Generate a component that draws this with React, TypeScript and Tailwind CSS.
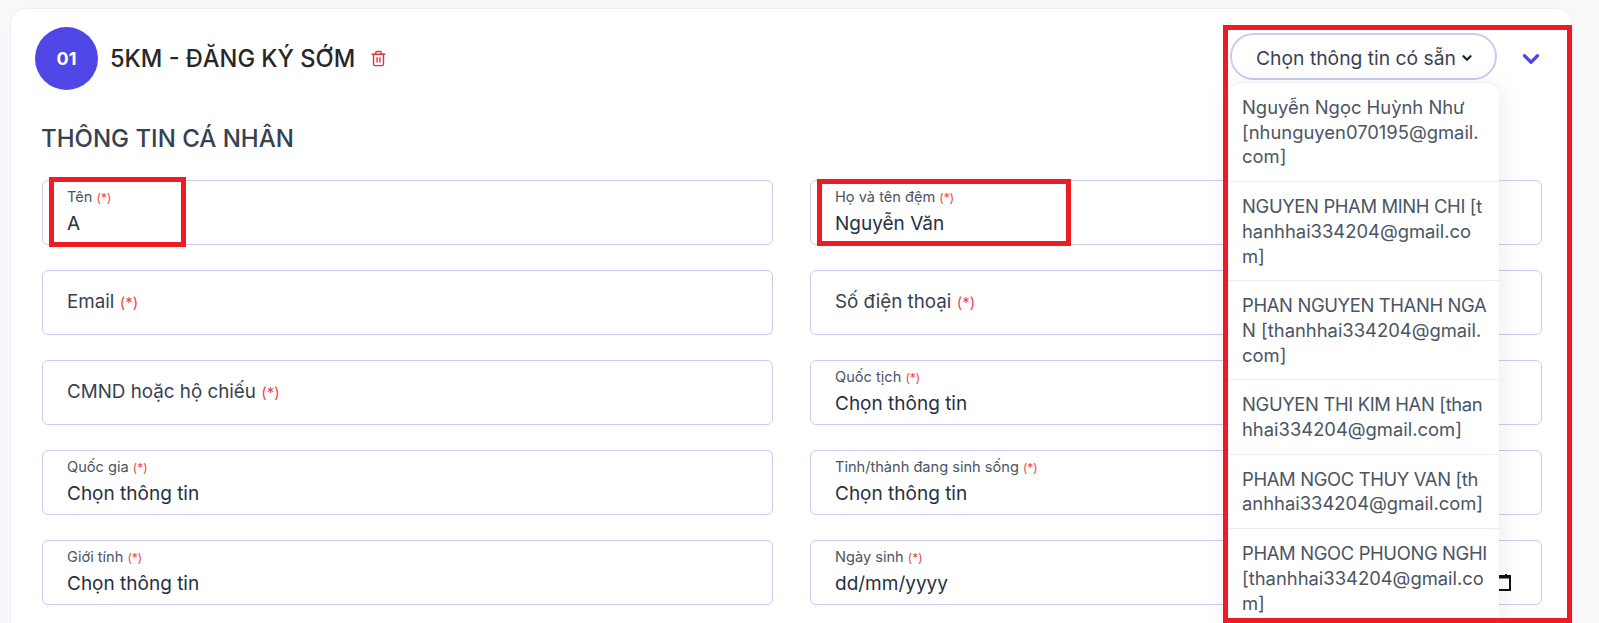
import { FiChevronDown, FiTrash2 } from "react-icons/fi";

type FieldProps = {
  label: string;
  value?: string;
  calendar?: boolean;
};

const Field = ({ label, value, calendar }: FieldProps) => {
  return (
    <div className="relative h-[65px] rounded-md border border-[#c9cdec] bg-white pl-[24px] flex flex-col justify-center">
      {value ? (
        <>
          <p className="text-[14.6px] leading-[16px] text-[#4b5563]">
            {label} <span className="text-[12px] text-[#ef4444]">(*)</span>
          </p>
          <p className="text-[19px] leading-[26px] text-[#27303f] mt-[5px]">{value}</p>
        </>
      ) : (
        <p className="text-[18.8px] text-[#374151]">
          {label} <span className="text-[15px] text-[#ef4444]">(*)</span>
        </p>
      )}
      {calendar && (
        <svg viewBox="0 0 20 17" className="absolute right-[30px] top-[33px] w-[20px] h-[17px]">
          <path d="M4 0h2v1h8V0h2v1h4v3.5H0V1h4z" fill="#111" />
          <path d="M1 3v13h18V3" fill="none" stroke="#111" strokeWidth="2" />
        </svg>
      )}
    </div>
  );
};

const people = [
  ["Nguyễn Ngọc Huỳnh Như", "[nhunguyen070195@gmail.", "com]"],
  ["NGUYEN PHAM MINH CHI [t", "hanhhai334204@gmail.co", "m]"],
  ["PHAN NGUYEN THANH NGA", "N [thanhhai334204@gmail.", "com]"],
  ["NGUYEN THI KIM HAN [than", "hhai334204@gmail.com]"],
  ["PHAM NGOC THUY VAN [th", "anhhai334204@gmail.com]"],
  ["PHAM NGOC PHUONG NGHI", "[thanhhai334204@gmail.co", "m]"],
];

const App = () => {
  return (
    <div className="relative h-[623px] overflow-hidden bg-[#fafafc] pt-2 pl-[10px] font-['Inter',sans-serif]">
      <div className="w-[1563px] h-[640px] rounded-2xl border border-[#eeeef6] bg-white px-[24px] pt-[18px] shadow-[0_0_20px_rgba(0,0,0,0.03)]">
        <div className="flex items-center">
          <div className="size-[63px] rounded-full bg-[#4f46e5] flex items-center justify-center text-white font-bold text-[18px]">
            01
          </div>
          <h1 className="ml-[12px] text-[23.6px] font-medium text-[#27272a]">5KM - ĐĂNG KÝ SỚM</h1>
          <FiTrash2 className="ml-[15px] text-[#e5323f] text-[17px]" />
          <div className="ml-auto mr-[4px] flex items-center">
            <button className="-mt-[4px] w-[267px] h-[47px] pt-[3px] pl-[3px] rounded-full border-2 border-[#c9cdec] bg-white flex items-center justify-center gap-1 text-[19.3px] text-[#374151]">
              Chọn thông tin có sẵn
              <FiChevronDown className="text-[#1f2937] text-[14px] stroke-[4]" />
            </button>
            <FiChevronDown className="ml-[21px] text-[#4f46e5] text-[26px] stroke-[3]" />
          </div>
        </div>

        <div className="pl-[7px] pr-[6px]">
          <h2 className="-ml-[1px] mt-[33px] text-[24px] leading-[32px] font-medium text-[#374151]">THÔNG TIN CÁ NHÂN</h2>
          <div className="mt-[25px] grid grid-cols-[731px_732px] gap-x-[37px] gap-y-[25px]">
            <div className="relative">
              <Field label="Tên" value="A" />
              <div className="absolute left-[7px] -top-[3px] h-[70px] w-[137px] border-[5px] border-[#ed1c24]" />
            </div>
            <div className="relative">
              <Field label="Họ và tên đệm" value="Nguyễn Văn" />
              <div className="absolute left-[7px] -top-[1px] h-[67px] w-[254px] border-[5px] border-[#ed1c24]" />
            </div>
            <Field label="Email" />
            <Field label="Số điện thoại" />
            <Field label="CMND hoặc hộ chiếu" />
            <Field label="Quốc tịch" value="Chọn thông tin" />
            <Field label="Quốc gia" value="Chọn thông tin" />
            <Field label="Tỉnh/thành đang sinh sống" value="Chọn thông tin" />
            <Field label="Giới tính" value="Chọn thông tin" />
            <Field label="Ngày sinh" value="dd/mm/yyyy" calendar />
          </div>
        </div>
      </div>

      {/* dropdown menu over the form */}
      <div className="absolute left-[1229px] top-[82px] w-[270px] rounded-t-xl border-t border-[#f0f0f6] bg-white shadow-[0_4px_24px_rgba(30,30,80,0.1)]">
        {people.map((lines) => (
          <div
            key={lines[0]}
            className="border-b border-[#ececf4] px-[13px] py-[12px] text-[18.4px] leading-[24.7px] text-[#4b5563] whitespace-nowrap"
          >
            {lines.map((line) => (
              <div key={line} className={/^[A-Z]{2,} /.test(line) ? "tracking-[-0.35px]" : ""}>
                {line}
              </div>
            ))}
          </div>
        ))}
      </div>

      <div className="absolute left-[1223px] top-[25px] h-[598px] w-[349px] border-[5px] border-[#ed1c24]" />
    </div>
  );
};

export default App;
